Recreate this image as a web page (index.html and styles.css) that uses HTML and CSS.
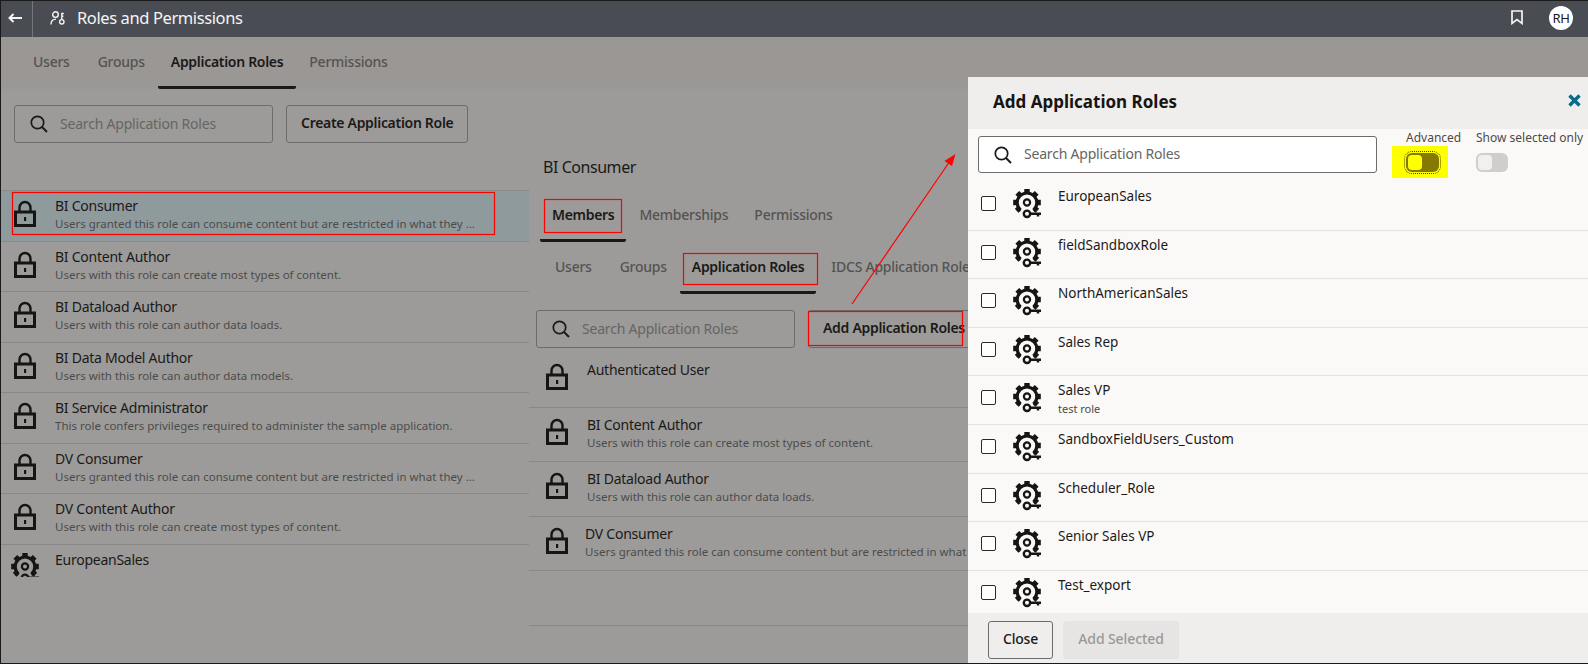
FILE: index.html
```html
<!DOCTYPE html>
<html lang="en">
<head>
<meta charset="utf-8">
<title>Roles and Permissions</title>
<link rel="stylesheet" href="styles.css">
</head>
<body>
<svg width="0" height="0" class="defs">
  <symbol id="lock" viewBox="0 0 22 27">
    <path d="M5.5 12V7.5a5.5 5.5 0 0 1 11 0V12" fill="none" stroke="currentColor" stroke-width="2.4"/>
    <rect x="1.5" y="12" width="19" height="13.5" fill="none" stroke="currentColor" stroke-width="3"/>
    <rect x="10" y="17" width="2.2" height="4" fill="currentColor"/>
  </symbol>
  <symbol id="gear" viewBox="0 0 28 30">
    <path d="M7.6 21.2A9.8 9.8 0 1 1 20.4 21.2" fill="none" stroke="currentColor" stroke-width="3.2"/>
    <path d="M14 4V0M20.8 6.7L23.7 3.8M24 13.5h3.8M21.8 19.6l2.6 2.2M4 13.5H.2M7.2 6.7L4.3 3.8M6.2 19.6l-2.6 2.2" fill="none" stroke="currentColor" stroke-width="5.4"/>
    <circle cx="14" cy="13.5" r="3.1" fill="none" stroke="currentColor" stroke-width="2.2"/>
    <circle cx="14" cy="24.8" r="3.2" fill="none" stroke="currentColor" stroke-width="2.4"/>
    <path d="M17 24.8h11M25 24.8v2.6" fill="none" stroke="currentColor" stroke-width="2.4"/>
  </symbol>
  <symbol id="search" viewBox="0 0 18 18">
    <circle cx="7.5" cy="7.5" r="6.2" fill="none" stroke="currentColor" stroke-width="1.7"/>
    <path d="M12 12l5 5" fill="none" stroke="currentColor" stroke-width="1.9"/>
  </symbol>
</svg>
<div class="frame">
  <header class="topbar">
    <button class="back" aria-label="Back">
      <svg class="back-icon" viewBox="0 0 14 10"><path d="M14 5H2M5.5 1L1.5 5l4 4" fill="none" stroke="currentColor" stroke-width="2"/></svg>
    </button>
    <svg class="app-icon" viewBox="0 0 15 14"><circle cx="5.5" cy="3.6" r="2.8" fill="none" stroke="currentColor" stroke-width="1.4"/><path d="M1 13.5c0-3.6 2-5.4 5-5.4" fill="none" stroke="currentColor" stroke-width="1.4"/><circle cx="11.8" cy="10.8" r="2.2" fill="none" stroke="currentColor" stroke-width="1.4"/><path d="M11.8 8.6V2.5h2M11.8 5.2h1.6" fill="none" stroke="currentColor" stroke-width="1.4"/></svg>
    <h1 class="app-title">Roles and Permissions</h1>
    <div class="topbar-right">
      <svg class="bookmark" viewBox="0 0 12 15"><path d="M1 1h10v12.4L6 9.6 1 13.4z" fill="none" stroke="currentColor" stroke-width="1.7"/></svg>
      <span class="avatar">RH</span>
    </div>
  </header>

  <nav class="main-tabs">
    <a class="tab">Users</a>
    <a class="tab">Groups</a>
    <a class="tab active">Application Roles</a>
    <a class="tab">Permissions</a>
  </nav>

  <main class="content">
    <section class="roles-col">
      <div class="actions">
        <div class="search"><svg class="search-icon"><use href="#search"/></svg><span class="placeholder">Search Application Roles</span></div>
        <button class="btn">Create Application Role</button>
      </div>
      <ul class="role-list">
        <li class="role selected"><svg class="lock"><use href="#lock"/></svg><div><div class="name">BI Consumer</div><div class="desc">Users granted this role can consume content but are restricted in what they …</div></div></li>
        <li class="role"><svg class="lock"><use href="#lock"/></svg><div><div class="name">BI Content Author</div><div class="desc">Users with this role can create most types of content.</div></div></li>
        <li class="role"><svg class="lock"><use href="#lock"/></svg><div><div class="name">BI Dataload Author</div><div class="desc">Users with this role can author data loads.</div></div></li>
        <li class="role"><svg class="lock"><use href="#lock"/></svg><div><div class="name">BI Data Model Author</div><div class="desc">Users with this role can author data models.</div></div></li>
        <li class="role"><svg class="lock"><use href="#lock"/></svg><div><div class="name">BI Service Administrator</div><div class="desc">This role confers privileges required to administer the sample application.</div></div></li>
        <li class="role"><svg class="lock"><use href="#lock"/></svg><div><div class="name">DV Consumer</div><div class="desc">Users granted this role can consume content but are restricted in what they …</div></div></li>
        <li class="role"><svg class="lock"><use href="#lock"/></svg><div><div class="name">DV Content Author</div><div class="desc">Users with this role can create most types of content.</div></div></li>
        <li class="role last"><svg class="gear-left"><use href="#gear"/></svg><div><div class="name">EuropeanSales</div></div></li>
      </ul>
    </section>

    <section class="detail-col">
      <h2 class="detail-title">BI Consumer</h2>
      <nav class="sub-tabs first">
        <a class="tab active">Members</a>
        <a class="tab">Memberships</a>
        <a class="tab">Permissions</a>
      </nav>
      <nav class="sub-tabs second">
        <a class="tab">Users</a>
        <a class="tab">Groups</a>
        <a class="tab active">Application Roles</a>
        <a class="tab">IDCS Application Roles</a>
      </nav>
      <div class="actions detail-actions">
        <div class="search"><svg class="search-icon"><use href="#search"/></svg><span class="placeholder">Search Application Roles</span></div>
        <button class="btn">Add Application Roles</button>
      </div>
      <ul class="member-list">
        <li class="member"><svg class="lock"><use href="#lock"/></svg><div><div class="name">Authenticated User</div></div></li>
        <li class="member"><svg class="lock"><use href="#lock"/></svg><div><div class="name">BI Content Author</div><div class="desc">Users with this role can create most types of content.</div></div></li>
        <li class="member"><svg class="lock"><use href="#lock"/></svg><div><div class="name">BI Dataload Author</div><div class="desc">Users with this role can author data loads.</div></div></li>
        <li class="member shifted"><svg class="lock"><use href="#lock"/></svg><div><div class="name">DV Consumer</div><div class="desc">Users granted this role can consume content but are restricted in what they can do</div></div></li>
        <li class="member"></li>
      </ul>
    </section>
  </main>

  <aside class="panel">
    <div class="panel-head">
      <h2 class="panel-title">Add Application Roles</h2>
      <svg class="close-x" viewBox="0 0 13 13"><path d="M1.5 1.5l10 10M11.5 1.5l-10 10" fill="none" stroke="currentColor" stroke-width="3.4"/></svg>
    </div>
    <div class="panel-tools">
      <div class="search panel-search"><svg class="search-icon"><use href="#search"/></svg><span class="placeholder">Search Application Roles</span></div>
      <div class="toggle-group advanced">
        <span class="toggle-label">Advanced</span>
        <span class="highlight"><span class="toggle on"><span class="knob"></span></span></span>
      </div>
      <div class="toggle-group">
        <span class="toggle-label">Show selected only</span>
        <span class="toggle off"><span class="knob"></span></span>
      </div>
    </div>
    <ul class="pick-list">
      <li class="pick"><span class="check"></span><svg class="gear"><use href="#gear"/></svg><div><div class="pick-name">EuropeanSales</div></div></li>
      <li class="pick"><span class="check"></span><svg class="gear"><use href="#gear"/></svg><div><div class="pick-name">fieldSandboxRole</div></div></li>
      <li class="pick"><span class="check"></span><svg class="gear"><use href="#gear"/></svg><div><div class="pick-name">NorthAmericanSales</div></div></li>
      <li class="pick"><span class="check"></span><svg class="gear"><use href="#gear"/></svg><div><div class="pick-name">Sales Rep</div></div></li>
      <li class="pick"><span class="check"></span><svg class="gear"><use href="#gear"/></svg><div><div class="pick-name">Sales VP</div><div class="pick-desc">test role</div></div></li>
      <li class="pick"><span class="check"></span><svg class="gear"><use href="#gear"/></svg><div><div class="pick-name">SandboxFieldUsers_Custom</div></div></li>
      <li class="pick"><span class="check"></span><svg class="gear"><use href="#gear"/></svg><div><div class="pick-name">Scheduler_Role</div></div></li>
      <li class="pick"><span class="check"></span><svg class="gear"><use href="#gear"/></svg><div><div class="pick-name">Senior Sales VP</div></div></li>
      <li class="pick"><span class="check"></span><svg class="gear"><use href="#gear"/></svg><div><div class="pick-name">Test_export</div></div></li>
    </ul>
    <div class="panel-foot">
      <button class="btn close-btn">Close</button>
      <button class="btn add-btn">Add Selected</button>
    </div>
  </aside>

  <svg class="annotations" viewBox="0 0 1588 664">
    <g fill="none" stroke="#ff0000" stroke-width="1.2">
      <rect x="12.5" y="192.5" width="482" height="42"/>
      <rect x="544.5" y="199.5" width="77" height="33"/>
      <rect x="683.5" y="253.5" width="134" height="31"/>
      <rect x="808.5" y="311.5" width="154" height="34"/>
      <path d="M852 304L950 161"/>
    </g>
    <path d="M955.5 154L944.5 161L952 166Z" fill="#ff0000"/>
  </svg>
</div>
</body>
</html>
```
FILE: styles.css
```css
* { box-sizing: border-box; }
html, body { margin: 0; padding: 0; }
body { width: 1588px; height: 664px; overflow: hidden; font-family: "Noto Sans", "Open Sans", sans-serif; color: #1b1918; }
ul { list-style: none; margin: 0; padding: 0; }
h1, h2 { margin: 0; font-weight: 400; }
button { font-family: inherit; }
.defs { position: absolute; }

.frame { position: relative; width: 1588px; height: 664px; border: 1px solid #1a1a1a; border-right: 0; display: flex; flex-direction: column; background: #9c9b99; overflow: hidden; }

.topbar { height: 36px; flex: none; background: #4a4c54; color: #f4f4f4; display: flex; align-items: center; }
.back { width: 32px; height: 36px; padding: 0 0 2px; background: none; border: 0; border-right: 1px solid #74767c; color: #f4f4f4; display: flex; align-items: center; justify-content: flex-start; }
.back-icon { width: 14px; height: 10px; margin-left: 7px; }
.app-icon { width: 15px; height: 14px; margin: 0 0 3px 17px; }
.app-title { font-size: 16.5px; letter-spacing: -0.4px; margin: 0 0 4px 12px; color: #f4f4f4; }
.topbar-right { margin-left: auto; display: flex; align-items: center; gap: 26px; padding: 0 15px 3px 0; }
.bookmark { width: 12px; height: 15px; }
.avatar { width: 24px; height: 24px; border-radius: 50%; background: #fff; color: #1b1918; font-size: 13px; letter-spacing: -0.3px; display: flex; align-items: center; justify-content: center; }

.main-tabs { height: 52px; flex: none; background: #9b9795; display: flex; padding-left: 19px; }
.tab { display: flex; align-items: center; padding: 0 13px 1px; font-size: 14px; letter-spacing: -0.25px; font-weight: 500; color: #545352; border-bottom: 3px solid transparent; white-space: nowrap; }
.tab.active { color: #1b1918; font-weight: 600; letter-spacing: -0.3px; border-bottom-color: #1b1918; border-radius: 0 0 2px 2px; }
.main-tabs .tab:nth-child(2) { margin-left: 2px; }

.content { flex: 1; display: grid; grid-template-columns: 528px 1fr; min-height: 0; }
.roles-col { padding-top: 16px; min-width: 0; }
.actions { display: flex; gap: 13px; padding-left: 13px; height: 38px; }
.search { width: 259px; height: 38px; border: 1px solid #6d6c6a; border-radius: 3px; display: flex; align-items: center; padding: 0 0 0 15px; }
.search-icon { width: 18px; height: 18px; color: #1b1918; flex: none; }
.placeholder { margin: 0 0 2px 12px; font-size: 14px; letter-spacing: -0.2px; color: #666563; white-space: nowrap; }
.btn { height: 38px; padding: 0 14px 3px; background: transparent; border: 1px solid #6d6c6a; border-radius: 3px; font-size: 14px; letter-spacing: -0.3px; font-weight: 600; color: #1b1918; white-space: nowrap; }

.role-list { margin-top: 47px; height: 387px; overflow: hidden; }
.role { height: 50.5px; display: flex; padding: 5px 0 0 54px; position: relative; border-top: 1px solid #8a8987; }
.role.selected { background: #8f9a9d; }
.role.last { border-top-color: #8a8987; }
.lock { position: absolute; left: 13px; top: 9px; width: 22px; height: 27px; color: #161514; }
.gear-left { position: absolute; left: 10px; top: 8px; width: 28px; height: 30px; color: #161514; }
.name { font-size: 14px; letter-spacing: -0.25px; line-height: 20px; color: #1b1918; white-space: nowrap; }
.desc { font-size: 11.5px; line-height: 16px; color: #4c4b4a; white-space: nowrap; }

.detail-col { min-width: 0; overflow: hidden; }
.detail-title { margin: 66px 0 0 14px; font-size: 16px; letter-spacing: -0.45px; line-height: 24px; color: #1b1918; height: 35px; }
.sub-tabs { height: 52px; display: flex; }
.sub-tabs.first { padding-left: 11px; }
.sub-tabs.second { padding-left: 13px; }
.sub-tabs.second .tab:nth-child(2) { margin-left: 2px; }
.sub-tabs.second .tab:nth-child(3) { padding: 0 12px 1px; }
.sub-tabs.second .tab:nth-child(4) { margin-left: 2px; }
.sub-tabs.first .tab:nth-child(1) { padding: 0 12px 1px; }
.detail-actions { margin-top: 16px; padding-left: 7px; }
.member-list { margin-top: 5px; }
.member { height: 54.5px; display: flex; padding: 7px 0 0 58px; position: relative; border-bottom: 1px solid #8a8987; }
.member .lock { left: 17px; top: 10px; }
.member.shifted { padding-left: 56px; }

.panel { position: absolute; left: 967px; top: 76px; right: 0; bottom: 0; background: #fbf9f8; display: flex; flex-direction: column; }
.panel-head { height: 52px; flex: none; background: #efeeec; display: flex; align-items: center; justify-content: space-between; padding: 0 7px 0 25px; }
.panel-title { font-size: 17px; font-weight: 700; color: #161513; margin-bottom: 4px; }
.close-x { width: 13px; height: 13px; color: #0b6a8a; margin-top: -5px; }
.panel-tools { height: 53px; flex: none; display: flex; padding: 7px 0 0 10px; }
.panel-search { width: 399px; height: 37px; background: #fff; }
.panel-search .placeholder { margin-left: 12px; }
.toggle-group { display: flex; flex-direction: column; align-items: flex-start; }
.advanced { width: 70px; margin-left: 29px; }
.toggle-label { font-size: 12px; line-height: 17px; height: 17px; margin-top: -7px; color: #4c4b4a; white-space: nowrap; }
.highlight { display: block; background: #ffff00; margin: 0 0 0 -14px; padding: 7px 9px 6px 14px; }
.toggle { display: block; width: 33px; height: 19px; border-radius: 6px; position: relative; }
.toggle.on { background: #857a00; outline: 1px dotted #4a4a00; outline-offset: 1px; }
.toggle.off { background: #cfcecc; margin-top: 7px; width: 32px; }
.knob { position: absolute; left: 2px; top: 2px; width: 14px; height: 15px; border-radius: 4px; }
.on .knob { background: #ffff00; }
.off .knob { background: #f1f0ee; }

.pick-list { flex: 1; overflow: hidden; min-height: 0; }
.pick { height: 48.6px; display: flex; align-items: flex-start; padding-left: 13px; border-bottom: 1px solid #e4e2e0; }
.check { width: 15px; height: 15px; flex: none; margin-top: 14px; border: 1.5px solid #2a2928; border-radius: 2px; background: #fff; }
.gear { width: 28px; height: 30px; flex: none; margin: 7px 17px 0 17px; color: #161513; }
.pick-name { font-size: 13.5px; line-height: 20px; margin-top: 4px; color: #1b1918; white-space: nowrap; }
.pick-desc { font-size: 11px; line-height: 15px; margin-top: 1px; color: #4c4b4a; }

.panel-foot { height: 50px; flex: none; background: #efeeec; display: flex; gap: 10px; padding: 8px 0 0 20px; }
.close-btn { width: 65px; background: transparent; font-weight: 500; letter-spacing: -0.2px; }
.add-btn { width: 116px; padding: 0 0 3px; background: #e6e5e3; border-color: #e6e5e3; color: #9a9997; font-weight: 500; letter-spacing: -0.1px; }

.annotations { position: absolute; left: -1px; top: -1px; width: 1588px; height: 664px; pointer-events: none; }
```
